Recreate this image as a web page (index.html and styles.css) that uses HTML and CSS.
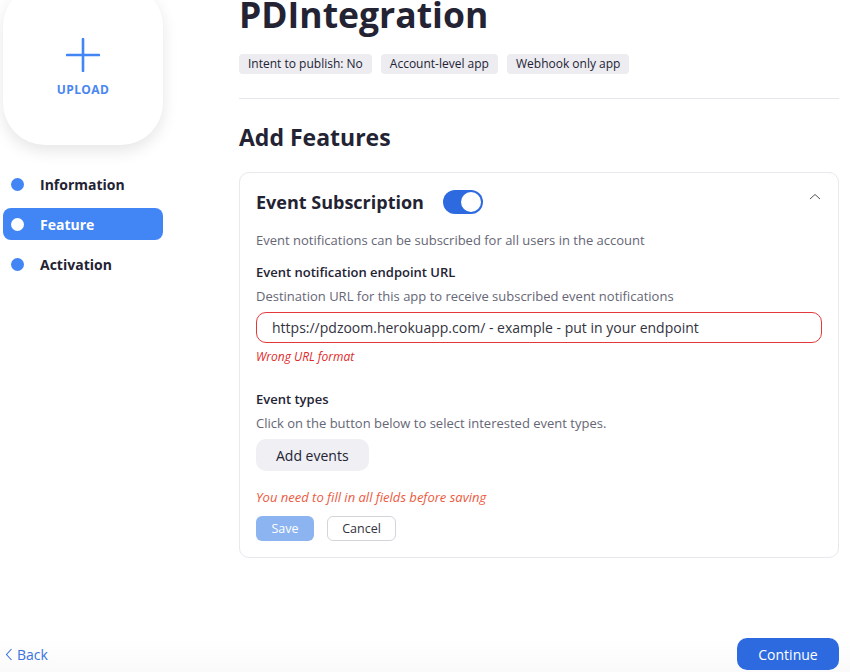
FILE: index.html
```html
<!DOCTYPE html>
<html>
<head>
<meta charset="utf-8">
<link rel="stylesheet" href="styles.css">
</head>
<body>
<div class="layout">
  <div class="top">
    <aside class="sidebar">
      <div class="upload">
        <svg class="plus" width="34" height="34" viewBox="0 0 34 34"><path d="M17 1V33M1 17H33" stroke="#4285f4" stroke-width="2.6" stroke-linecap="round" fill="none"/></svg>
        <div class="upload-label">UPLOAD</div>
      </div>
      <nav class="nav">
        <div class="nav-item"><span class="dot"></span>Information</div>
        <div class="nav-item active"><span class="dot"></span>Feature</div>
        <div class="nav-item"><span class="dot"></span>Activation</div>
      </nav>
    </aside>
    <main class="main">
      <h1 class="title">PDIntegration</h1>
      <div class="tags">
        <span class="tag">Intent to publish: No</span>
        <span class="tag">Account-level app</span>
        <span class="tag">Webhook only app</span>
      </div>
      <hr class="divider">
      <h2 class="section-title">Add Features</h2>
      <section class="card">
        <div class="card-head">
          <span class="card-title">Event Subscription</span>
          <span class="toggle"><span class="knob"></span></span>
          <svg class="chev" width="12" height="7" viewBox="0 0 12 7"><path d="M1 6L6 1.5L11 6" stroke="#555" stroke-width="1" fill="none"/></svg>
        </div>
        <p class="desc first">Event notifications can be subscribed for all users in the account</p>
        <p class="label">Event notification endpoint URL</p>
        <p class="desc tight">Destination URL for this app to receive subscribed event notifications</p>
        <div class="input">https://pdzoom.herokuapp.com/ - example - put in your endpoint</div>
        <p class="error">Wrong URL format</p>
        <p class="label types">Event types</p>
        <p class="desc tight">Click on the button below to select interested event types.</p>
        <button class="add-btn">Add events</button>
        <p class="warn">You need to fill in all fields before saving</p>
        <div class="actions">
          <button class="save">Save</button>
          <button class="cancel">Cancel</button>
        </div>
      </section>
    </main>
  </div>
  <footer class="footer">
    <a class="back"><svg width="8" height="13" viewBox="0 0 8 13"><path d="M6.5 1L1.5 6.5L6.5 12" stroke="#3b73e0" stroke-width="1.1" fill="none"/></svg>Back</a>
    <button class="continue">Continue</button>
  </footer>
</div>
</body>
</html>
```
FILE: styles.css
```css
* { box-sizing: border-box; }
html, body { margin: 0; padding: 0; background: #fff; }
body {
  font-family: "Open Sans", "Noto Sans", sans-serif;
  color: #232333;
  overflow: hidden;
}
.layout {
  display: flex;
  flex-direction: column;
  min-height: calc(100vh + 16px);
  margin-top: -16px;
}
.top {
  display: flex;
}
.sidebar {
  width: 239px;
  flex: none;
  padding-left: 3px;
}
.upload {
  width: 160px;
  height: 161px;
  border-radius: 42px;
  background: #fff;
  box-shadow: 0 6px 16px rgba(0,0,0,0.10);
  display: flex;
  flex-direction: column;
  align-items: center;
  padding-top: 54px;
}
.plus { display: block; }
.upload-label {
  margin-top: 10px;
  font-size: 12px;
  font-weight: 700;
  letter-spacing: 0.4px;
  color: #4a86f2;
  line-height: 16px;
}
.nav {
  margin-top: 23px;
  width: 160px;
  display: flex;
  flex-direction: column;
  gap: 8px;
}
.nav-item {
  height: 32px;
  display: flex;
  align-items: center;
  padding-left: 8px;
  font-size: 14px;
  font-weight: 700;
  color: #232333;
  border-radius: 8px;
}
.dot {
  width: 13px;
  height: 13px;
  border-radius: 50%;
  background: #4285f4;
  margin-right: 16px;
}
.nav-item.active {
  background: #4285f4;
  color: #fff;
}
.nav-item.active .dot { background: #fff; }

.main {
  width: 600px;
  flex: none;
  padding-top: 16px;
}
.title {
  margin: 0;
  font-size: 35.5px;
  font-weight: 700;
  line-height: 28px;
  color: #232333;
}
.tags {
  display: flex;
  gap: 9px;
  margin-top: 26px;
}
.tag {
  height: 20px;
  line-height: 20px;
  padding: 0 9px;
  font-size: 12px;
  background: #ececf1;
  border-radius: 4px;
  color: #232333;
}
.divider {
  border: 0;
  border-top: 1px solid #e6e6eb;
  margin: 24px 0 0;
}
.section-title {
  margin: 22px 0 0;
  font-size: 23px;
  font-weight: 700;
  line-height: 32px;
}
.card {
  margin-top: 19px;
  border: 1px solid #e8e8ed;
  border-radius: 10px;
  padding: 16px 16px 16px 16px;
}
.card-head {
  display: flex;
  align-items: center;
  height: 26px;
}
.card-title {
  font-size: 18px;
  font-weight: 700;
  margin-right: 19px;
}
.toggle {
  width: 40px;
  height: 24px;
  border-radius: 12px;
  background: #2d6ae0;
  display: flex;
  align-items: center;
  justify-content: flex-end;
  padding-right: 2px;
}
.knob {
  width: 20px;
  height: 20px;
  border-radius: 50%;
  background: #fff;
}
.chev {
  margin-left: auto;
  margin-right: 1px;
  margin-top: -11px;
}
p { margin: 0; }
.desc {
  font-size: 13px;
  line-height: 20px;
  color: #666676;
}
.desc.first { margin-top: 15px; }
.desc.tight { margin-top: 4px; }
.label {
  margin-top: 12px;
  font-size: 13px;
  line-height: 20px;
  font-weight: 600;
  color: #232333;
}
.label.types { margin-top: 23px; }
.desc.tight + .input { margin-top: 6px; }
.input {
  width: 566px;
  height: 31px;
  border: 1px solid #e5383b;
  border-radius: 10px;
  padding-left: 15px;
  font-size: 14px;
  line-height: 29px;
  color: #333340;
}
.error {
  margin-top: 5px;
  font-size: 12px;
  line-height: 18px;
  font-style: italic;
  color: #e02a2a;
}
.add-btn {
  margin-top: 6px;
  height: 32px;
  padding: 0 20px;
  border: 0;
  border-radius: 10px;
  background: #efeff4;
  font-family: inherit;
  font-size: 14px;
  color: #232333;
  display: block;
}
.warn {
  margin-top: 16px;
  font-size: 13px;
  line-height: 20px;
  font-style: italic;
  color: #ec5a3f;
}
.actions {
  margin-top: 9px;
  display: flex;
  gap: 13px;
}
.save, .cancel {
  height: 25px;
  border-radius: 6px;
  font-family: inherit;
  font-size: 12.5px;
  padding: 0;
}
.save {
  width: 58px;
  border: 0;
  background: #8cb4f0;
  color: #fff;
}
.cancel {
  width: 69px;
  border: 1px solid #d4d4db;
  background: #fff;
  color: #333340;
}
.footer {
  margin-top: auto;
  display: flex;
  align-items: center;
  justify-content: space-between;
  padding: 0 11px 2px 5px;
  background: linear-gradient(to bottom, #fff, #fafafa);
}
.back {
  display: flex;
  align-items: center;
  gap: 4px;
  font-size: 14px;
  color: #3b73e0;
}
.continue {
  width: 102px;
  height: 32px;
  border: 0;
  border-radius: 10px;
  background: #2d6ae0;
  color: #fff;
  font-family: inherit;
  font-size: 14px;
}
```
